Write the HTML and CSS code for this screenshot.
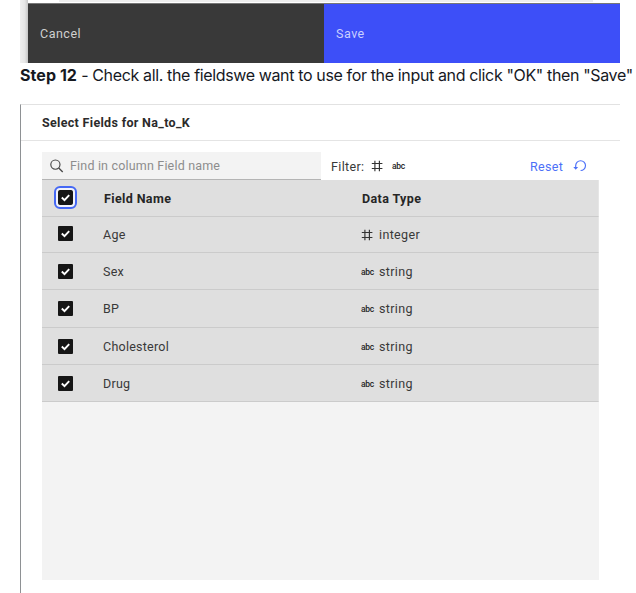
FILE: index.html
```html
<!DOCTYPE html>
<html lang="en">
<head>
<meta charset="utf-8">
<title>Select Fields</title>
<link rel="stylesheet" href="styles.css">
</head>
<body>
<svg class="defs" width="0" height="0">
  <symbol id="check" viewBox="0 0 15 15"><rect width="15" height="15" rx="1" fill="#161616"/><path d="M3.8 7.5 6.5 10.1 11.2 5.1" fill="none" stroke="#fff" stroke-width="1.9"/></symbol>
  <symbol id="hash" viewBox="0 0 12 12"><path d="M3.9.8v10.4M8.4.8v10.4M.8 3.5h10.6M.8 8.5h10.6" fill="none" stroke="#333" stroke-width="1.15"/></symbol>
</svg>
<div class="modal-end">
  <div class="shade"></div>
  <div class="modal-body">
    <div class="scroll"></div>
    <div class="actions"><div class="cancel">Cancel</div><div class="save">Save</div></div>
  </div>
</div>
<p class="step"><b>Step 12</b> <span class="instruction">- Check all. the fieldswe want to use for the input and click "OK" then "Save"</span></p>
<section class="dialog">
  <header class="title"><span>Select Fields for Na_to_K</span></header>
  <div class="toolbar">
    <div class="search">
      <svg width="14" height="14" viewBox="0 0 14 14"><circle cx="5.4" cy="5.6" r="4.6" fill="none" stroke="#484848" stroke-width="1.15"/><path d="M8.7 9l4 4" stroke="#484848" stroke-width="1.3"/></svg>
      <span>Find in column Field name</span>
    </div>
    <span class="filter">Filter:</span>
    <svg class="hash" width="12" height="12"><use href="#hash"/></svg>
    <span class="abc">abc</span>
    <span class="reset">Reset</span>
    <svg class="undo" width="14" height="14" viewBox="0 0 14 14"><path d="M2.7 9V6.6a4.9 4.9 0 1 1 4.9 4.9" fill="none" stroke="#4c70f8" stroke-width="1.15"/><path d="M.3 8h4.8L2.7 10.8z" fill="#4c70f8"/></svg>
  </div>
  <div class="table">
    <div class="row head"><span class="box focus"><svg width="15" height="15"><use href="#check"/></svg></span><span class="name">Field Name</span><span class="type">Data Type</span></div>
    <div class="row age"><span class="box"><svg width="15" height="15"><use href="#check"/></svg></span><span class="name">Age</span><span class="type"><svg class="hash" width="12" height="12"><use href="#hash"/></svg><span>integer</span></span></div>
    <div class="row low"><span class="box"><svg width="15" height="15"><use href="#check"/></svg></span><span class="name">Sex</span><span class="type"><span class="abc">abc</span><span>string</span></span></div>
    <div class="row tall"><span class="box"><svg width="15" height="15"><use href="#check"/></svg></span><span class="name">BP</span><span class="type"><span class="abc">abc</span><span>string</span></span></div>
    <div class="row low"><span class="box"><svg width="15" height="15"><use href="#check"/></svg></span><span class="name">Cholesterol</span><span class="type"><span class="abc">abc</span><span>string</span></span></div>
    <div class="row low"><span class="box"><svg width="15" height="15"><use href="#check"/></svg></span><span class="name">Drug</span><span class="type"><span class="abc">abc</span><span>string</span></span></div>
  </div>
</section>
</body>
</html>
```
FILE: styles.css
```css
* { box-sizing: border-box; }
body { margin: 0; width: 636px; height: 593px; overflow: hidden; background: #fff; color: #393939; font: 12.5px/18px Roboto, sans-serif; letter-spacing: .35px; }
.defs { position: absolute; }
svg { display: block; flex: none; }
.modal-end { display: flex; height: 63px; margin-left: 20px; width: 600px; }
.shade { width: 8px; background: linear-gradient(90deg, #f0f0f0, #e6e6e6 60%, #c6c6c6); }
.modal-body { flex: 1; }
.scroll { height: 3px; margin: 0 27px 0 31px; background: linear-gradient(#eee 2px, #fff 2px); }
.actions { display: flex; height: 60px; border-top: 1px solid #777; }
.cancel, .save { width: 296px; padding: 21px 12px; }
.cancel { background: #393939; color: #d0d0d0; letter-spacing: .5px; }
.save { background: #3d4ff8; color: #c9d0ff; letter-spacing: .5px; }
.step { margin: 0 0 0 20px; height: 41px; white-space: nowrap; font: 16px/25px Inter, sans-serif; letter-spacing: -.36px; color: #16191f; }
.step b { font-weight: 700; letter-spacing: .06px; }
.dialog { margin-left: 20px; width: 600px; height: 489px; border-left: 1px solid #8e9194; border-top: 1px solid #e2e2e2; }
.title { height: 36px; border-bottom: 1px solid #e4e4e4; padding: 9px 21px; font-weight: 700; color: #2b2b2b; letter-spacing: .32px; }
.toolbar { display: flex; height: 39px; padding: 11px 0 0 21px; align-items: center; }
.search { display: flex; align-items: center; width: 279px; height: 28px; padding-left: 8px; gap: 6px; background: #f3f3f3; border-bottom: 1px solid #b4b4b4; color: #8d8d8d; letter-spacing: .18px; }
.search span, .filter, .reset { padding-top: 1px; }
.filter { margin-left: 10px; width: 40px; }
.abc { font-size: 8.5px; line-height: 12px; letter-spacing: -.25px; width: 18px; font-weight: 500; color: #262626; }
.toolbar .abc { margin-left: 9px; width: 138px; }
.reset { width: 43px; color: #4c70f8; }
.table { width: 557px; height: 400px; margin-left: 21px; background: #f3f3f3; }
.row { display: flex; align-items: center; height: 37px; background: #dfdfdf; border-bottom: 1px solid #cbcbcb; border-right: 1px solid #e6e6e6; }
.age { height: 36px; }
.low { padding-top: 2px; }
.tall { height: 38px; padding-top: 1px; }
.box { width: 61px; padding-left: 15.5px; }
.box svg { margin-top: -2px; }
.focus svg { margin-top: -1px; outline: 2px solid #4568f5; outline-offset: 2px; border-radius: 2px; box-shadow: 0 0 0 2px #f2f3fa; }
.name { width: 258px; letter-spacing: .25px; }
.head { font-weight: 700; color: #262626; letter-spacing: .38px; }
.head .name { letter-spacing: .38px; padding-top: 1px; }
.head .type { padding-top: 1px; }
.head .box { width: 62px; }
.type { display: flex; align-items: center; }
.type .hash { margin-right: 6px; }
```
